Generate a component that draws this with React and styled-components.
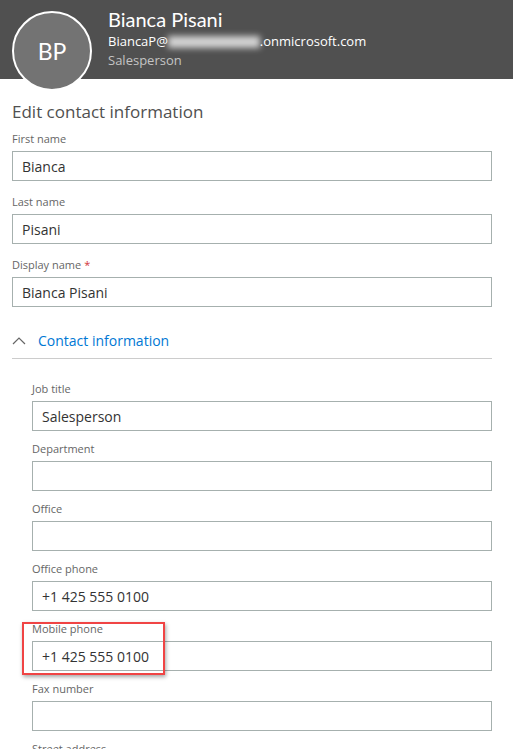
import React from 'react'
import styled, { createGlobalStyle } from 'styled-components'

const Global = createGlobalStyle`
    html, body {
        margin: 0;
        padding: 0;
        background: #ffffff;
    }
    body {
        font-family: "Open Sans", "Noto Sans", sans-serif;
        width: 513px;
        height: 749px;
        overflow: hidden;
    }
`

const Page = styled.div`
    position: relative;
    width: 513px;
`

const Header = styled.div`
    height: 79px;
    background: #505050;
    display: flex;
    align-items: flex-start;
    padding-left: 12px;
    gap: 16px;
`

const Avatar = styled.div`
    width: 76px;
    height: 76px;
    margin-top: 11px;
    border-radius: 50%;
    border: 2px solid #ffffff;
    background: #737373;
    color: #ffffff;
    font-family: "Lato", "Open Sans", sans-serif;
    font-size: 23px;
    display: flex;
    align-items: center;
    justify-content: center;
    flex-shrink: 0;
`

const Identity = styled.div`
    display: flex;
    flex-direction: column;
    padding-top: 6px;
`

const Name = styled.div`
    font-family: "Lato", "Open Sans", sans-serif;
    font-size: 20px;
    color: #ffffff;
    line-height: 26px;
`

const Email = styled.div`
    font-size: 13px;
    color: #ffffff;
    line-height: 19px;
    display: flex;
    align-items: center;
`

const Blur = styled.span`
    display: inline-block;
    width: 92px;
    height: 12px;
    background: rgba(255, 255, 255, 0.75);
    filter: blur(3px);
`

const Role = styled.div`
    font-size: 13px;
    color: #c4c4c4;
    line-height: 19px;
`

const Body = styled.div`
    padding: 22px 21px 0 12px;
`

const Heading = styled.h1`
    margin: 0 0 7px;
    font-size: 17px;
    font-weight: 400;
    color: #505050;
    line-height: 22px;
`

const Field = styled.div`
    display: flex;
    flex-direction: column;
    margin-left: ${p => (p.$nested ? '20px' : '0')};
    margin-bottom: ${p => (p.$nested ? '9px' : '12px')};
`

const Label = styled.label`
    font-size: 11px;
    color: #666666;
    line-height: 18px;
    margin-bottom: 3px;
`

const Required = styled.span`
    color: #d13438;
    margin-left: 3px;
`

const Input = styled.div`
    height: 28px;
    border: 1px solid #a6b0ae;
    padding: 0 9px;
    font-size: 14px;
    color: #333333;
    display: flex;
    align-items: center;
`

const Section = styled.div`
    display: flex;
    align-items: center;
    gap: 12px;
    height: 35px;
    padding-top: 4px;
    border-bottom: 1px solid #cccccc;
    margin-bottom: 21px;
    color: #0078d4;
    font-size: 14px;
`

const Highlight = styled.div`
    position: absolute;
    left: 22px;
    top: 622px;
    width: 139px;
    height: 49px;
    border: 2px solid #f04444;
    box-shadow: 1px 2px 4px rgba(0, 0, 0, 0.35);
    pointer-events: none;
`

const Chevron = () => (
  <svg width="14" height="8" viewBox="0 0 14 8">
    <path d="M1 7 L7 1 L13 7" fill="none" stroke="#666" strokeWidth="1.2" />
  </svg>
)

const top = [
  { label: 'First name', value: 'Bianca' },
  { label: 'Last name', value: 'Pisani' },
  { label: 'Display name', value: 'Bianca Pisani', required: true },
]

const contact = [
  { label: 'Job title', value: 'Salesperson' },
  { label: 'Department', value: '' },
  { label: 'Office', value: '' },
  { label: 'Office phone', value: '+1 425 555 0100' },
  { label: 'Mobile phone', value: '+1 425 555 0100' },
  { label: 'Fax number', value: '' },
  { label: 'Street address', value: '' },
]

export default function App() {
  return (
    <Page>
      <Global />
      <Header>
        <Avatar>BP</Avatar>
        <Identity>
          <Name>Bianca Pisani</Name>
          <Email>BiancaP@<Blur />.onmicrosoft.com</Email>
          <Role>Salesperson</Role>
        </Identity>
      </Header>
      <Body>
        <Heading>Edit contact information</Heading>
        {top.map(f => (
          <Field key={f.label}>
            <Label>
              {f.label}
              {f.required && <Required>*</Required>}
            </Label>
            <Input>{f.value}</Input>
          </Field>
        ))}
        <Section>
          <Chevron />
          Contact information
        </Section>
        {contact.map(f => (
          <Field key={f.label} $nested>
            <Label>{f.label}</Label>
            <Input>{f.value}</Input>
          </Field>
        ))}
      </Body>
      <Highlight />
    </Page>
  )
}
